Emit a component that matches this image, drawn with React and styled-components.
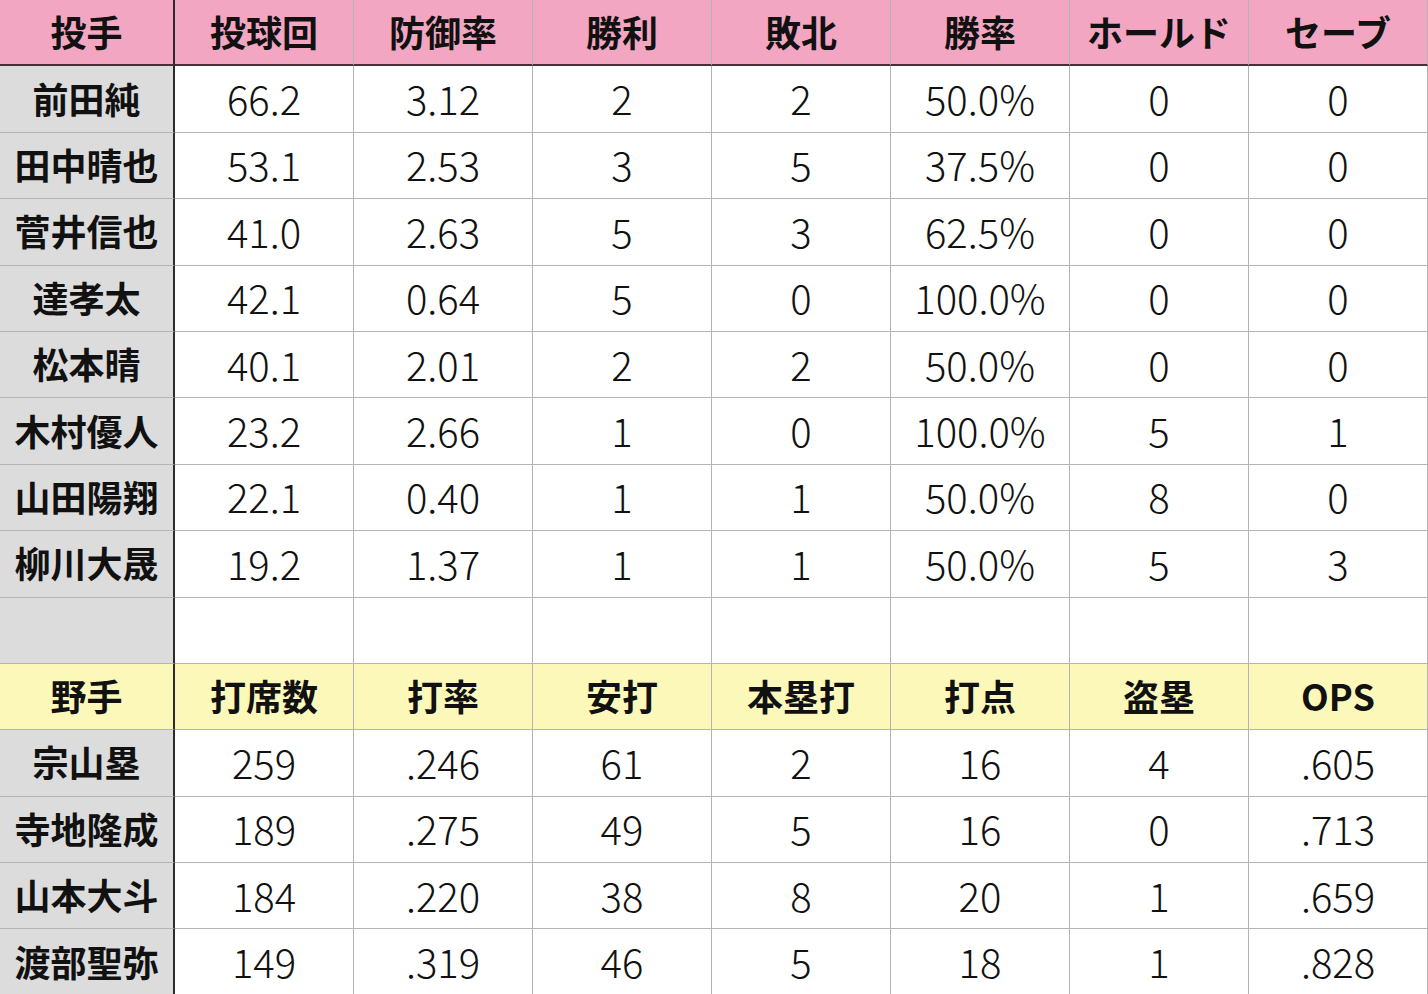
import styled, { createGlobalStyle } from 'styled-components';

const GlobalStyle = createGlobalStyle`
     html, body {
          margin: 0;
          padding: 0;
          background: #ffffff;
          overflow: hidden;
     }
`

const pitchers = {
     head: ["投手", "投球回", "防御率", "勝利", "敗北", "勝率", "ホールド", "セーブ"],
     rows: [
          ["前田純", "66.2", "3.12", "2", "2", "50.0%", "0", "0"],
          ["田中晴也", "53.1", "2.53", "3", "5", "37.5%", "0", "0"],
          ["菅井信也", "41.0", "2.63", "5", "3", "62.5%", "0", "0"],
          ["達孝太", "42.1", "0.64", "5", "0", "100.0%", "0", "0"],
          ["松本晴", "40.1", "2.01", "2", "2", "50.0%", "0", "0"],
          ["木村優人", "23.2", "2.66", "1", "0", "100.0%", "5", "1"],
          ["山田陽翔", "22.1", "0.40", "1", "1", "50.0%", "8", "0"],
          ["柳川大晟", "19.2", "1.37", "1", "1", "50.0%", "5", "3"],
     ],
}

const batters = {
     head: ["野手", "打席数", "打率", "安打", "本塁打", "打点", "盗塁", "OPS"],
     rows: [
          ["宗山塁", "259", ".246", "61", "2", "16", "4", ".605"],
          ["寺地隆成", "189", ".275", "49", "5", "16", "0", ".713"],
          ["山本大斗", "184", ".220", "38", "8", "20", "1", ".659"],
          ["渡部聖弥", "149", ".319", "46", "5", "18", "1", ".828"],
     ],
}

const Sheet = styled.div`
     display: grid;
     grid-template-columns: 175px repeat(7, 1fr);
     grid-auto-rows: 66.4px;
     width: 1428px;
     height: 994px;
     overflow: hidden;
     font-family: "Noto Sans CJK JP", "Noto Sans", sans-serif;
     color: #111111;
`
const Cell = styled.div`
     display: flex;
     align-items: center;
     justify-content: center;
     box-sizing: border-box;
     padding-bottom: ${props => props.$bold ? "3px" : "2px"};
     background: ${props => props.$bg || "#ffffff"};
     border-right: ${props => props.$first ? "2px solid #2e2a2b" : "1px solid #b4b4b4"};
     border-bottom: ${props => props.$strong ? "2px solid #4a2f38" : "1px solid #b4b4b4"};
     font-size: ${props => props.$bold ? "36px" : "40px"};
     font-weight: ${props => props.$bold ? 700 : 300};
     white-space: nowrap;
`

const HeadRow = ({ labels, bg, strong }) => labels.map((label, i) =>
     <Cell key={label} $bg={bg} $first={i === 0} $strong={strong} $bold>{label}</Cell>
)

const DataRow = ({ values }) => values.map((value, i) =>
     i === 0
          ? <Cell key={i} $bg="#dcdcdc" $first $bold>{value}</Cell>
          : <Cell key={i}>{value}</Cell>
)

export default function App() {
     return (
          <>
               <GlobalStyle />
               <Sheet>
                    <HeadRow labels={pitchers.head} bg="#f3a6c1" strong />
                    {pitchers.rows.map(row => <DataRow key={row[0]} values={row} />)}
                    <DataRow values={["", "", "", "", "", "", "", ""]} />
                    <HeadRow labels={batters.head} bg="#fcf8b9" />
                    {batters.rows.map(row => <DataRow key={row[0]} values={row} />)}
               </Sheet>
          </>
     )
}
